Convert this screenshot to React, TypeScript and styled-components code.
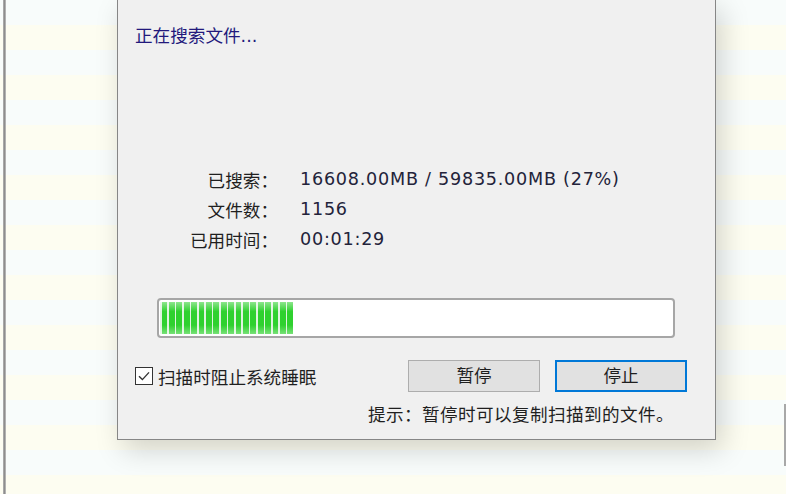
import { FC } from 'react'
import styled, { createGlobalStyle } from 'styled-components'

const GlobalStyle = createGlobalStyle`
  html, body {
    margin: 0;
    padding: 0;
    width: 786px;
    height: 494px;
    overflow: hidden;
    background: #fbfdf9;
  }
  * {
    box-sizing: border-box;
  }
`

const Stage = styled.div`
  position: relative;
  width: 786px;
  height: 494px;
  overflow: hidden;
  font-family: 'DejaVu Sans', 'Noto Sans CJK SC', sans-serif;
  font-size: 17.6px;
  color: #1f1f1f;
  background: repeating-linear-gradient(
    180deg,
    #f8fcfb 0 25px,
    #fdfdf1 25px 50px
  );
`

const WindowEdge = styled.div`
  position: absolute;
  left: 3px;
  top: 0;
  bottom: 0;
  width: 3px;
  background: linear-gradient(90deg, #b5b5b5, #8e8e8e, #c4c4c4);
`

const RightEdge = styled.div`
  position: absolute;
  right: 0;
  top: 404px;
  height: 62px;
  width: 2px;
  background: #a8a8a8;
`

const Dialog = styled.div`
  position: absolute;
  left: 117px;
  top: -1px;
  width: 599px;
  height: 441px;
  background: #f0f0f0;
  border: 1px solid #868686;
  box-shadow: 6px 10px 26px rgba(0, 0, 0, 0.17);
  display: flex;
  flex-direction: column;
`

const Status = styled.div`
  margin: 24px 0 0 17px;
  line-height: 24px;
  color: #22197c;
`

const Stats = styled.div`
  margin-top: 116px;
  display: grid;
  grid-template-columns: 160px auto;
  column-gap: 22px;
  grid-auto-rows: 30px;
  align-items: center;
`

const Label = styled.span`
  text-align: right;
`

const Value = styled.span`
  color: #23233a;
  letter-spacing: 0.75px;
`

const Progress = styled.div`
  margin: 44px 0 0 39px;
  width: 518px;
  height: 40px;
  border: 2px solid #a6a6a6;
  border-radius: 4px;
  background: #ffffff;
  padding: 2px 1px;
`

const Fill = styled.div`
  height: 100%;
  background:
    linear-gradient(
      180deg,
      rgba(255, 255, 255, 0.45) 0%,
      rgba(255, 255, 255, 0) 30%,
      rgba(255, 255, 255, 0) 72%,
      rgba(255, 255, 255, 0.35) 100%
    ),
    repeating-linear-gradient(
      90deg,
      #dff3df 0 1.5px,
      #2fd12f 1.5px 7.4px
    );
`

const Controls = styled.div`
  margin-top: 22px;
  height: 32px;
  display: flex;
  align-items: center;
  padding-left: 17px;
`

const CheckRow = styled.label`
  display: flex;
  align-items: center;
  gap: 5px;
  width: 273px;
`

const Box = styled.span`
  width: 18px;
  height: 18px;
  border: 1px solid #333;
  background: #fff;
  display: flex;
  align-items: center;
  justify-content: center;
`

const Button = styled.button<{ $default?: boolean }>`
  width: 132px;
  height: 32px;
  margin-right: 15px;
  font: inherit;
  color: #1f1f1f;
  background: #e1e1e1;
  border: ${p => (p.$default ? '2px solid #0078d7' : '1px solid #adadad')};
  padding: 0;
  line-height: 28px;
`

const Tip = styled.div`
  margin: 11px 0 0 250px;
  line-height: 24px;
  letter-spacing: 0.4px;
`

const CheckMark: FC = () => (
  <svg width='14' height='14' viewBox='0 0 14 14'>
    <path d='M2 7.2 L5.4 10.6 L12 3.4' fill='none' stroke='#333' strokeWidth='1.4' />
  </svg>
)

export default function App() {
  const searched = 16608
  const total = 59835
  const pct = Math.floor((searched / total) * 100)
  const blocks = Math.floor(((pct / 100) * 512) / 7.4)

  return (
    <>
      <GlobalStyle />
      <Stage>
        <WindowEdge />
        <RightEdge />
        <Dialog>
          <Status>正在搜索文件...</Status>
          <Stats>
            <Label>已搜索：</Label>
            <Value>
              {searched}.00MB / {total}.00MB ({pct}%)
            </Value>
            <Label>文件数：</Label>
            <Value>1156</Value>
            <Label>已用时间：</Label>
            <Value>00:01:29</Value>
          </Stats>
          <Progress>
            <Fill style={{ width: `${blocks * 7.4}px` }} />
          </Progress>
          <Controls>
            <CheckRow>
              <Box>
                <CheckMark />
              </Box>
              扫描时阻止系统睡眠
            </CheckRow>
            <Button>暂停</Button>
            <Button $default>停止</Button>
          </Controls>
          <Tip>提示：暂停时可以复制扫描到的文件。</Tip>
        </Dialog>
      </Stage>
    </>
  )
}
